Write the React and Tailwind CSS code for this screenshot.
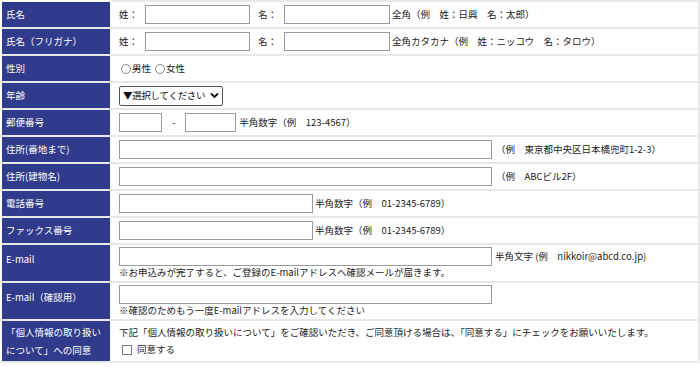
import React from "react";

const font = { fontFamily: '"Noto Sans CJK JP", "Noto Sans", sans-serif' };

function Label({ children }) {
  return (
    <div className="w-[108px] shrink-0 bg-[#303b8b] text-white px-[4px] flex items-center">
      {children}
    </div>
  );
}

function Row({ label, children, h = "h-[27px]" }) {
  return (
    <div className={`flex ${h} border-b-2 border-[#e8e8e8]`}>
      <Label>{label}</Label>
      <div className="flex-1 flex flex-col justify-center pl-[7px] border-r-2 border-[#e8e8e8] ml-[2px]">
        {children}
      </div>
    </div>
  );
}

function Input({ w }) {
  return <div className={`${w} h-[19px] border border-[#9a9a9a] bg-white shrink-0`} />;
}

export default function App() {
  return (
    <div className="w-[700px] h-[367px] bg-white pt-[2px] pl-[2px] text-[9.5px] text-[#222]" style={font}>
      <div className="border-t-2 border-[#e8e8e8] -mt-[2px] ml-[110px]" />
      <Row label="氏名">
        <div className="flex items-center">
          <span className="w-[26px]">姓：</span>
          <Input w="w-[105px]" />
          <span className="ml-[8px] w-[26px]">名：</span>
          <Input w="w-[106px]" />
          <span className="ml-[2px]">全角（例　姓：日興　名：太郎）</span>
        </div>
      </Row>
      <Row label="氏名（フリガナ）">
        <div className="flex items-center">
          <span className="w-[26px]">姓：</span>
          <Input w="w-[105px]" />
          <span className="ml-[8px] w-[26px]">名：</span>
          <Input w="w-[106px]" />
          <span className="ml-[2px]">全角カタカナ（例　姓：ニッコウ　名：タロウ）</span>
        </div>
      </Row>
      <Row label="性別">
        <div className="flex items-center pl-[2px]">
          <span className="w-[10px] h-[10px] rounded-full border border-[#888] mr-[1px]" />
          <span>男性</span>
          <span className="w-[10px] h-[10px] rounded-full border border-[#888] ml-[4px] mr-[1px]" />
          <span>女性</span>
        </div>
      </Row>
      <Row label="年齢">
        <div className="flex">
          <div className="w-[104px] h-[20px] border border-[#555] rounded-[2px] flex items-center justify-between px-[3px] text-[#111] whitespace-nowrap overflow-hidden">
            <span className="tracking-[-0.3px]">▼選択してください</span>
            <svg className="shrink-0" width="9" height="7" viewBox="0 0 9 7">
              <path d="M1 1.5 L4.5 5 L8 1.5" stroke="#111" strokeWidth="1.8" fill="none" />
            </svg>
          </div>
        </div>
      </Row>
      <Row label="郵便番号">
        <div className="flex items-center">
          <Input w="w-[43px]" />
          <span className="mx-[10px]">-</span>
          <Input w="w-[51px]" />
          <span className="ml-[3px]">半角数字（例　123-4567）</span>
        </div>
      </Row>
      <Row label="住所(番地まで)">
        <div className="flex items-center">
          <Input w="w-[373px]" />
          <span className="ml-[4px]">（例　東京都中央区日本橋兜町1-2-3）</span>
        </div>
      </Row>
      <Row label="住所(建物名)">
        <div className="flex items-center">
          <Input w="w-[373px]" />
          <span className="ml-[4px]">（例　ABCビル2F）</span>
        </div>
      </Row>
      <Row label="電話番号">
        <div className="flex items-center">
          <Input w="w-[194px]" />
          <span className="ml-[2px]">半角数字（例　01-2345-6789）</span>
        </div>
      </Row>
      <Row label="ファックス番号">
        <div className="flex items-center">
          <Input w="w-[194px]" />
          <span className="ml-[2px]">半角数字（例　01-2345-6789）</span>
        </div>
      </Row>
      <Row label={<span className="self-start mt-[7px]">E-mail</span>} h="h-[38px]">
        <div className="flex items-center">
          <Input w="w-[373px]" />
          <span className="ml-[3px]">半角文字 (例　nikkoir@abcd.co.jp)</span>
        </div>
        <div className="leading-[13px]">※お申込みが完了すると、ご登録のE-mailアドレスへ確認メールが届きます。</div>
      </Row>
      <Row label={<span className="self-start mt-[7px]">E-mail（確認用）</span>} h="h-[38px]">
        <div className="flex items-center">
          <Input w="w-[373px]" />
        </div>
        <div className="leading-[13px]">※確認のためもう一度E-mailアドレスを入力してください</div>
      </Row>
      <Row
        label={
          <span className="leading-[18px]">
            「個人情報の取り扱い
            <br />
            について」への同意
          </span>
        }
        h="h-[42px]"
      >
        <div className="leading-[17px]">下記「個人情報の取り扱いについて」をご確認いただき、ご同意頂ける場合は、「同意する」にチェックをお願いいたします。</div>
        <div className="flex items-center pl-[3px] leading-[17px]">
          <span className="w-[10px] h-[10px] border border-[#777] bg-white mr-[5px]" />
          <span>同意する</span>
        </div>
      </Row>
    </div>
  );
}
